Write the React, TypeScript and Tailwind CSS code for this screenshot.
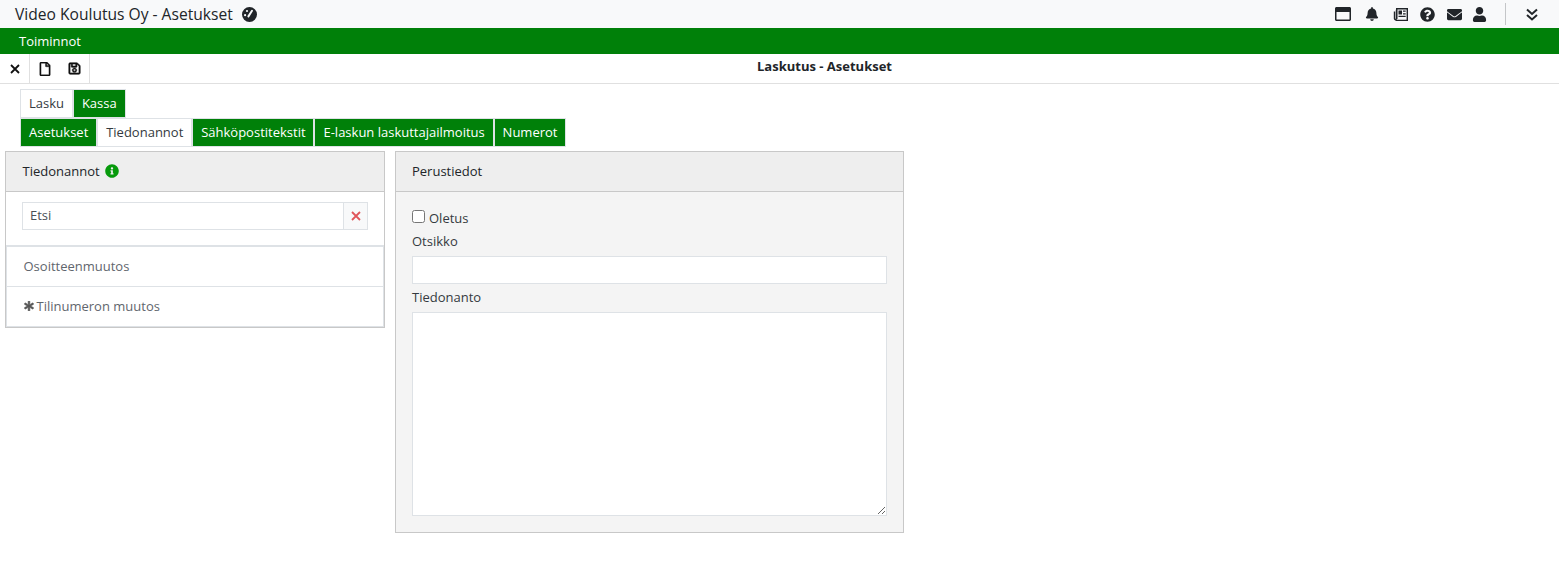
import { FaAsterisk, FaBell, FaEnvelope, FaInfoCircle, FaQuestionCircle, FaRegFile, FaRegSave, FaRegWindowMaximize, FaUser } from "react-icons/fa"

const topTabs = [
  { label: "Lasku", active: true },
  { label: "Kassa", active: false },
]

const subTabs = [
  { label: "Asetukset", active: false },
  { label: "Tiedonannot", active: true },
  { label: "Sähköpostitekstit", active: false },
  { label: "E-laskun laskuttajailmoitus", active: false },
  { label: "Numerot", active: false },
]

function Tab({ label, active }: { label: string; active: boolean }) {
  return (
    <div
      className={
        active
          ? "flex h-[29px] items-center border border-[#dee2e6] bg-white pb-[2px] pl-2 pr-[7.9px] text-[#343a40]"
          : "flex h-[29px] items-center border border-[#dee2e6] bg-[#008009] pb-[2px] pl-2 pr-[7.9px] text-white"
      }
    >
      {label}
    </div>
  )
}

function Gauge() {
  return (
    <svg viewBox="0 0 15 15" className="ml-[9px] h-[15px] w-[15px] text-[#212529]">
      <circle cx="7.5" cy="7.5" r="7.5" fill="currentColor" />
      <path d="M6.4 9.4 10 3.8" stroke="#f8f9fa" strokeWidth="2" strokeLinecap="round" />
      <circle cx="3.1" cy="8.2" r="1.1" fill="#f8f9fa" />
      <circle cx="5" cy="4" r="1.1" fill="#f8f9fa" />
    </svg>
  )
}

function Newspaper() {
  return (
    <svg viewBox="0 0 15 13" className="ml-[14px] h-[13px] w-[15px]" fill="none">
      <path d="M3.5 1.7V10.5a1 1 0 0 1-2 0V3.5" stroke="currentColor" strokeWidth="1.4" />
      <path fillRule="evenodd" clipRule="evenodd" d="M3 0H15V13H2.5V11.7H13.6V1.4H4.4V11H3ZM5.5 2.5H9V6.5H5.5ZM10 2.5H12.7V3.8H10ZM10 5.2H12.7V6.5H10ZM5.5 7.8H12.7V9H5.5Z" fill="currentColor" />
    </svg>
  )
}

function Cross({ className }: { className: string }) {
  return (
    <svg viewBox="0 0 10 10" className={className}>
      <path d="M1 1 9 9M9 1 1 9" stroke="currentColor" strokeWidth="1.8" />
    </svg>
  )
}

export default function App() {
  return (
    <div className="h-[582px] overflow-hidden bg-white font-['Open_Sans',sans-serif] text-[13px] leading-[20px] text-[#343a40]">
      <header className="flex h-[28px] items-center bg-[#f8f9fa] pl-[15px] pr-[21px]">
        <span className="text-[15.6px] text-[#212529]">Video Koulutus Oy - Asetukset</span>
        <Gauge />
        <div className="ml-auto flex items-center text-[#212529]">
          <FaRegWindowMaximize className="text-[16px]" />
          <FaBell className="ml-[14px] text-[14px]" />
          <Newspaper />
          <FaQuestionCircle className="ml-[12px] text-[15px]" />
          <FaEnvelope className="ml-[12px] text-[15px]" />
          <FaUser className="ml-[10px] text-[15px]" />
          <div className="ml-[18px] h-[22px] w-px bg-[#c4c6c8]" />
          <svg viewBox="0 0 12 13" fill="none" className="ml-[20px] h-[13px] w-[12px]">
            <path d="M1 1.5 6 6 11 1.5M1 7 6 11.5 11 7" stroke="currentColor" strokeWidth="2" />
          </svg>
        </div>
      </header>

      <div className="flex h-[26px] items-center bg-[#008009] pl-[19px] text-white">Toiminnot</div>

      <div className="flex h-[30px] border-b border-[#e0e0e0]">
        <div className="flex w-[30px] items-center justify-center border-r border-[#e0e0e0]">
          <Cross className="h-[10px] w-[10px] text-[#111]" />
        </div>
        <div className="flex w-[60px] items-center justify-center gap-[16px] border-r border-[#e0e0e0] text-[#111]">
          <FaRegFile className="text-[14px]" stroke="currentColor" strokeWidth={12} />
          <FaRegSave className="text-[13px]" stroke="currentColor" strokeWidth={24} />
        </div>
        <div className="flex-1 pt-[2px] text-center font-bold text-[#212529]">Laskutus - Asetukset</div>
      </div>

      <div className="mt-[5px] flex pl-[20px]">
        {topTabs.map((t) => (
          <Tab key={t.label} {...t} />
        ))}
      </div>
      <div className="flex pl-[20px]">
        {subTabs.map((t) => (
          <Tab key={t.label} {...t} />
        ))}
      </div>

      <div className="mt-[4px] flex items-start pl-[5px]">
        <section className="w-[380px] border border-[#c8c8c8]">
          <div className="flex h-[40px] items-center border-b border-[#c8c8c8] bg-[#eeeeee] pb-[2px] pl-[16.5px] text-[#212529]">
            Tiedonannot
            <FaInfoCircle className="ml-[5.5px] text-[14px] text-[#079a0c]" />
          </div>
          <div className="px-[16px] pb-[15px] pt-[10px]">
            <div className="flex h-[28px] border border-[#dee2e6]">
              <div className="flex-1 pl-[7px] leading-[24px] text-[#495057]">Etsi</div>
              <div className="flex w-[24px] items-center justify-center border-l border-[#dee2e6] bg-[#f8f9fa]">
                <Cross className="h-[10px] w-[10px] text-[#e0555a]" />
              </div>
            </div>
          </div>
          <div className="border-t-2 border-[#dee2e6]" />
          <div className="border-x border-b border-[#dee2e6]">
            <div className="flex h-[40px] items-center border-b border-[#dee2e6] pb-[2px] pl-[16.5px] text-[#5f666d]">Osoitteenmuutos</div>
            <div className="flex h-[39px] items-center pb-[1px] pl-[16.5px] text-[#5f666d]">
              <FaAsterisk className="mr-[3px] text-[10px] text-[#555]" stroke="currentColor" strokeWidth={30} />
              Tilinumeron muutos
            </div>
          </div>
        </section>

        <section className="ml-[10px] h-[382px] w-[509px] border border-[#c8c8c8] bg-[#f4f4f4]">
          <div className="flex h-[40px] items-center border-b border-[#c8c8c8] bg-[#eeeeee] pb-[2px] pl-[16px] text-[#212529]">Perustiedot</div>
          <div className="px-[16px] pt-[16px]">
            <label className="flex h-[20px] items-start">
              <input type="checkbox" className="mr-[4px] mt-[2px] h-[13px] w-[13px]" />
              Oletus
            </label>
            <div className="mt-[3px] h-[21px]">Otsikko</div>
            <div className="mt-[4px] h-[28px] border border-[#dee2e6] bg-white" />
            <div className="mt-[3px] h-[21px]">Tiedonanto</div>
            <textarea className="mt-[4px] block h-[204px] w-full border border-[#dee2e6] bg-white" />
          </div>
        </section>
      </div>
    </div>
  )
}
